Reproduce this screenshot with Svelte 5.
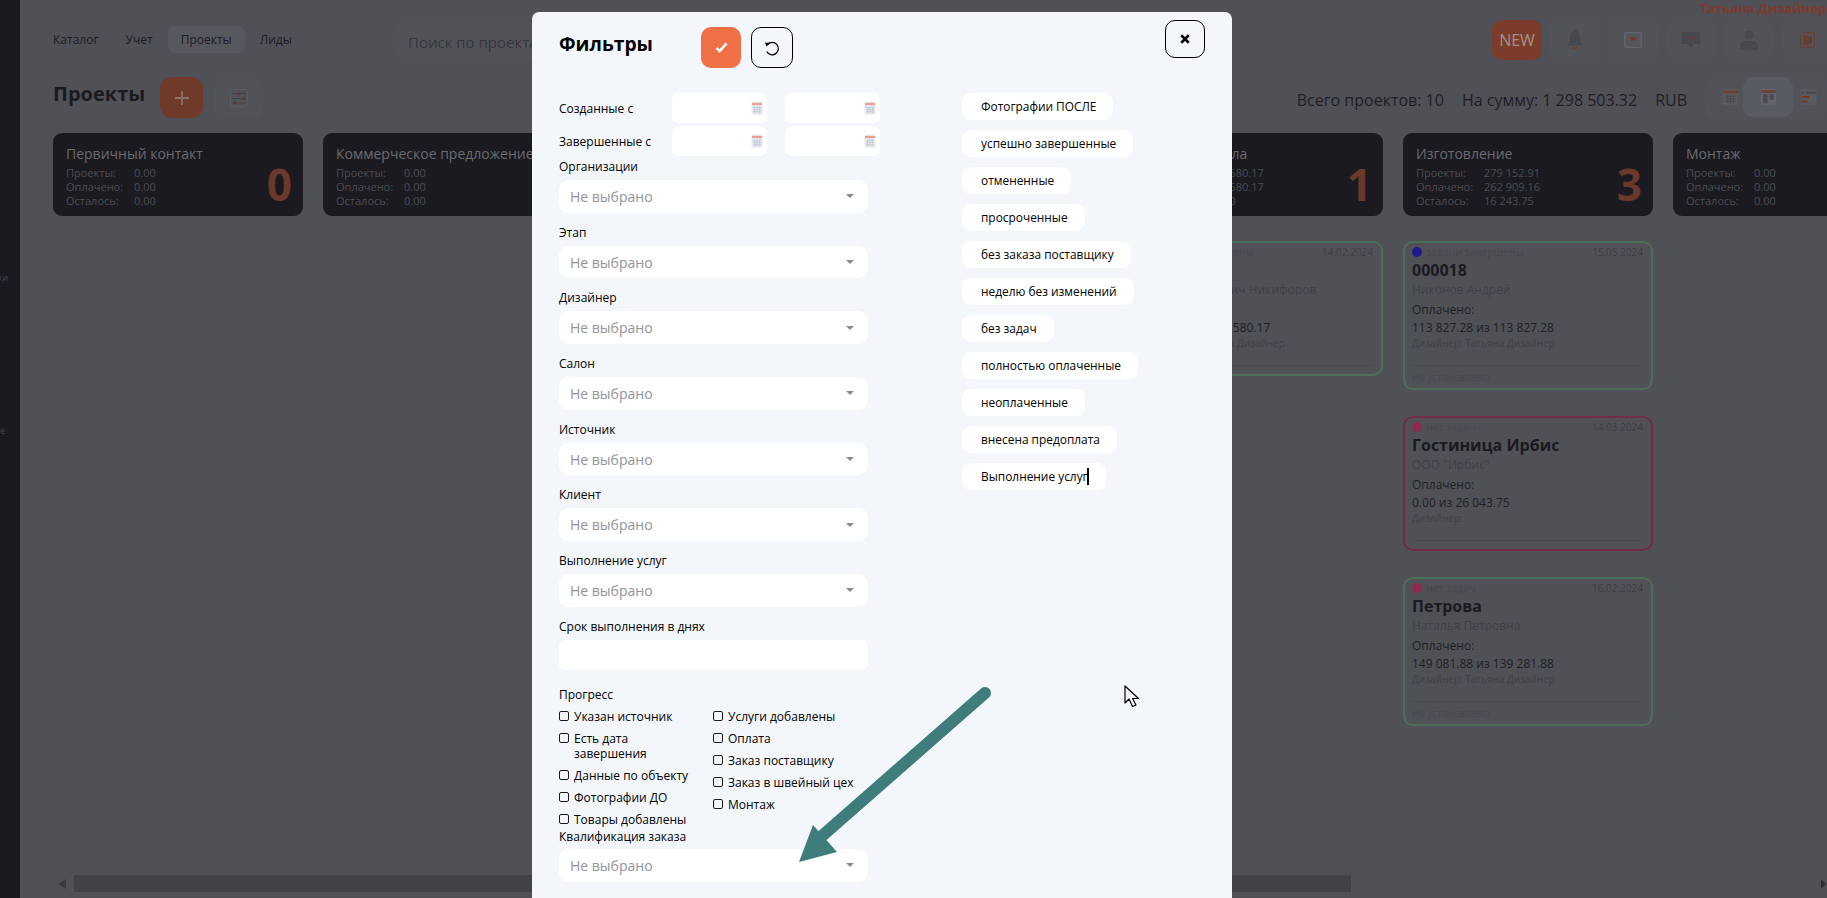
<script>
  const tabs = ['Каталог', 'Учет', 'Проекты', 'Лиды'];
  const stats = [
    { t: 'Первичный контакт', a: '0.00', b: '0.00', c: '0.00', n: 0 },
    { t: 'Коммерческое предложение', a: '0.00', b: '0.00', c: '0.00', n: 0 },
    null,
    null,
    { t: 'Проект начала', a: '43 580.17', b: '43 580.17', c: '0.00', n: 1 },
    { t: 'Изготовление', a: '279 152.91', b: '262 909.16', c: '16 243.75', n: 3 },
    { t: 'Монтаж', a: '0.00', b: '0.00', c: '0.00', n: 0 }
  ];
  const col5 = [
    { tone: 'green', dot: 'blue', st: 'задачи завершены', date: '14.02.2024', title: '', who: 'Сергей Иванович Никифоров', sum: '43 580.17 из 43 580.17', des: 'Дизайнер: Татьяна Дизайнер', foot: '' }
  ];
  const col6 = [
    { tone: 'green', dot: 'blue', st: 'задачи завершены', date: '15.05.2024', title: '000018', who: 'Никонов Андрей', sum: '113 827.28 из 113 827.28', des: 'Дизайнер: Татьяна Дизайнер', foot: 'Не установлено' },
    { tone: 'red', dot: 'red', st: 'нет задач', date: '14.03.2024', title: 'Гостиница Ирбис', who: 'ООО "Ирбис"', sum: '0.00 из 26 043.75', des: 'Дизайнер:', foot: '' },
    { tone: 'green', dot: 'red', st: 'нет задач', date: '16.02.2024', title: 'Петрова', who: 'Наталья Петровна', sum: '149 081.88 из 139 281.88', des: 'Дизайнер: Татьяна Дизайнер', foot: 'Не установлено' }
  ];
  const columns = [[], [], [], [], col5, col6];
  const selects = ['Организации', 'Этап', 'Дизайнер', 'Салон', 'Источник', 'Клиент', 'Выполнение услуг'];
  const checksA = ['Указан источник', 'Есть дата завершения', 'Данные по объекту', 'Фотографии ДО', 'Товары добавлены'];
  const checksB = ['Услуги добавлены', 'Оплата', 'Заказ поставщику', 'Заказ в швейный цех', 'Монтаж'];
  const pills = ['Фотографии ПОСЛЕ', 'успешно завершенные', 'отмененные', 'просроченные', 'без заказа поставщику', 'неделю без изменений', 'без задач', 'полностью оплаченные', 'неоплаченные', 'внесена предоплата'];
  const dates = ['Созданные с', 'Завершенные с'];
</script>

{#snippet calIcon()}
  <svg class="cal" viewBox="0 0 12 14" width="12" height="14">
    <rect x="0.5" y="0.5" width="11" height="13" rx="1.5" fill="#e4e8ee" />
    <rect x="1" y="2" width="10" height="2" fill="#ee9c8c" />
    <path d="M2 6.5h8M2 8.5h8M2 10.5h8M3.5 5.5v6.5M6 5.5v6.5M8.5 5.5v6.5" stroke="#c3c9d3" stroke-width="0.8" />
  </svg>
{/snippet}

{#snippet dimCal()}
  <svg viewBox="0 0 18 20" width="17" height="18">
    <rect x="0.5" y="1" width="17" height="18" rx="2" fill="#5a5b61" />
    <rect x="1" y="3" width="16" height="3" fill="#6b3f31" />
    <path d="M3 9h12M3 12h12M3 15h12M6 8v9M9 8v9M12 8v9" stroke="#47484e" stroke-width="1.1" />
  </svg>
{/snippet}

{#snippet cardView(c)}
  <div class="job {c.tone}">
    <div class="job-top">
      <span class="dot {c.dot}"></span>
      <span class="st">{c.st}</span>
      <span class="date">{c.date}</span>
    </div>
    <div class="job-title">{c.title}</div>
    <div class="job-who">{c.who}</div>
    <div class="job-paid">Оплачено:</div>
    <div class="job-sum">{c.sum}</div>
    <div class="job-des">{c.des}</div>
    <div class="job-foot">{c.foot}</div>
  </div>
{/snippet}

<div class="page">
  <aside class="side">
    <span class="side-a">ки</span>
    <span class="side-b">е</span>
  </aside>

  <main class="main">
    <header class="top">
      <nav class="tabs">
        {#each tabs as t}
          <span class="tab" class:on={t === 'Проекты'}>{t}</span>
        {/each}
      </nav>
      <div class="search">Поиск по проектам</div>
      <div class="top-right">
        <div class="user">Татьяна Дизайнер</div>
        <div class="icons">
          <span class="new">NEW</span>
          <span class="ib">
            <svg viewBox="0 0 20 26" width="18" height="24"><circle cx="10" cy="3" r="2" fill="#47484e" /><path d="M10 3c-4 0-5.500 3-5.500 7 0 5-1.500 7-3.500 9h18c-2-2-3.500-4-3.500-9 0-4-1.500-7-5.500-7z" fill="#47484e" /><path d="M6 21h8l-4 2.500z" fill="#733a2a" /></svg>
          </span>
          <span class="ib">
            <svg viewBox="0 0 18 16" width="18" height="16"><rect x="0.700" y="0.700" width="16.600" height="14.600" rx="1.500" fill="#56575d" stroke="#66676d" stroke-width="1.200" /><path d="M4 5h10l-5 4z" fill="#733a2a" /></svg>
          </span>
          <span class="ib">
            <svg viewBox="0 0 20 18" width="20" height="18"><path d="M2 1h16a1.500 1.500 0 0 1 1.500 1.500v9a1.500 1.500 0 0 1-1.500 1.500h-5l-3 3.500-3-3.500h-5a1.500 1.500 0 0 1-1.500-1.500v-9a1.500 1.500 0 0 1 1.500-1.500z" fill="#47484e" /><circle cx="6" cy="7" r="1" fill="#733a2a" /><circle cx="10" cy="7" r="1" fill="#733a2a" /><circle cx="14" cy="7" r="1" fill="#733a2a" /></svg>
          </span>
          <span class="ib">
            <svg viewBox="0 0 18 20" width="18" height="20"><circle cx="9" cy="5" r="4.500" fill="#48494f" /><path d="M0 20v-4c0-3 3-5 5-5h8c2 0 5 2 5 5v4z" fill="#48494f" /></svg>
          </span>
          <span class="ib">
            <svg viewBox="0 0 15 16" width="15" height="16"><rect x="0.700" y="0.700" width="13.600" height="14.600" rx="1.500" fill="none" stroke="#6b3e30" stroke-width="1.200" /><path d="M3 2.500l6 1.500v10l-6-1.500z" fill="#6b3e30" /><path d="M9 4h3v8h-3" fill="#46474c" /></svg>
          </span>
        </div>
      </div>
    </header>

    <section class="head">
      <h1>Проекты</h1>
      <span class="add">
        <svg viewBox="0 0 16 16" width="16" height="16"><path d="M8 1v14M1 8h14" stroke="#8d7068" stroke-width="1.800" /></svg>
      </span>
      <span class="fil">
        <svg viewBox="0 0 18 18" width="18" height="18"><rect x="0.500" y="0.500" width="17" height="17" rx="2" fill="none" stroke="#606167" stroke-width="0.800" /><path d="M2 4.500h14M2 9.500h14M2 14h14" stroke="#414248" stroke-width="1" /><circle cx="9" cy="4.500" r="1.500" fill="#6b3428" /><circle cx="14" cy="9.500" r="1.500" fill="#6b3428" /><circle cx="5" cy="14" r="1.500" fill="#6b3428" /></svg>
      </span>
      <div class="totals">
        <span>Всего проектов: 10</span>
        <span>На сумму: 1 298 503.32</span>
        <span>RUB</span>
      </div>
      <div class="views">
        <span class="vb">{@render dimCal()}</span>
        <span class="vb act">
          <svg viewBox="0 0 18 20" width="17" height="18"><rect x="0.500" y="1" width="17" height="18" rx="2" fill="#62636c" /><rect x="1" y="2.500" width="16" height="3" fill="#6b3f31" /><rect x="3" y="7" width="5" height="10" fill="#4a4b52" /><rect x="10" y="7" width="5" height="6" fill="#4a4b52" /></svg>
        </span>
        <span class="vb last">
          <svg viewBox="0 0 18 20" width="17" height="18"><rect x="0" y="1" width="18" height="18" rx="2" fill="#5a5b61" /><path d="M1 5h3M6 5h11" stroke="#47484e" stroke-width="2.500" /><path d="M1 10h9M1 15h7" stroke="#6f3b2d" stroke-width="2.500" /></svg>
        </span>
      </div>
    </section>

    <section class="stats">
      {#each stats as s}
        <div class="stat">
          {#if s}
            <div>
              <div class="stat-t">{s.t}</div>
              <div class="stat-r"><span>Проекты:</span><span>{s.a}</span></div>
              <div class="stat-r"><span>Оплачено:</span><span>{s.b}</span></div>
              <div class="stat-r"><span>Осталось:</span><span>{s.c}</span></div>
            </div>
            <div class="stat-n">{s.n}</div>
          {/if}
        </div>
      {/each}
    </section>

    <section class="board">
      {#each columns as col}
        <div class="col">
          {#each col as c}
            {@render cardView(c)}
          {/each}
        </div>
      {/each}
    </section>

    <div class="scroll">
      <span class="arr l"></span>
      <span class="thumb"></span>
      <span class="arr r"></span>
    </div>
  </main>

  <div class="modal">
    <button class="close" aria-label="Закрыть">
      <svg viewBox="0 0 12 12" width="10" height="10"><path d="M1.500 1.500l9 9M10.500 1.500l-9 9" stroke="#000" stroke-width="3" /></svg>
    </button>
    <div class="m-head">
      <h2>Фильтры</h2>
      <button class="ok" aria-label="Применить">
        <svg viewBox="0 0 14 12" width="13" height="11"><path d="M1.500 6.500l3.500 3.500 7.500-8.500" fill="none" stroke="#fff" stroke-width="2.800" /></svg>
      </button>
      <button class="undo" aria-label="Сбросить">
        <svg viewBox="0 0 16 16" width="16" height="16"><path d="M3.500 4.500a6.200 6.200 0 1 1-0.800 7" fill="none" stroke="#000" stroke-width="1.300" /><path d="M1 2.500l5 .5-3.500 3.500z" fill="#000" /></svg>
      </button>
    </div>

    <div class="m-body">
      <div class="left">
        {#each dates as d}
          <div class="drow">
            <span class="dl">{d}</span>
            <span class="dinp">{@render calIcon()}</span>
            <span class="dinp">{@render calIcon()}</span>
          </div>
        {/each}
        <div class="groups">
          {#each selects as s}
            <div class="lab">{s}</div>
            <div class="sel"><span>Не выбрано</span><i></i></div>
          {/each}
          <div class="lab">Срок выполнения в днях</div>
          <div class="inp"></div>
        </div>
        <div class="lab prog">Прогресс</div>
        <div class="checks">
          <div class="cc">
            {#each checksA as c}
              <div class="chk"><b></b><span>{c}</span></div>
            {/each}
          </div>
          <div class="cc">
            {#each checksB as c}
              <div class="chk"><b></b><span>{c}</span></div>
            {/each}
          </div>
        </div>
        <div class="lab qual">Квалификация заказа</div>
        <div class="sel"><span>Не выбрано</span><i></i></div>
      </div>

      <div class="right">
        {#each pills as p}
          <span class="pill">{p}</span>
        {/each}
        <span class="pill">Выполнение услуг<em></em></span>
      </div>
    </div>
  </div>

  <svg class="arrow" viewBox="0 0 1827 898" width="1827" height="898">
    <path d="M985 693L822 836" stroke="#3f7d7d" stroke-width="12" stroke-linecap="round" fill="none" />
    <path d="M799 862L813 825L837 852z" fill="#3f7d7d" />
  </svg>
  <svg class="mouse" viewBox="0 0 16 25" width="16" height="25">
    <path d="M1 1v17l4-4 3.500 7.500 3.500-1.500-3.500-6.500h6z" fill="#f3f7fc" stroke="#000" stroke-width="1.200" stroke-linejoin="round" />
  </svg>
</div>

<style>
  :global(body) { margin: 0; }
  * { box-sizing: border-box; }
  .page {
    width: 1827px; height: 898px; display: flex; overflow: hidden; position: relative;
    background: #505157; font-family: "Open Sans", "Noto Sans", sans-serif; color: #1c1c22;
  }
  .side { width: 20px; flex: none; background: #1a1a20; position: relative; color: #45464b; font-size: 9px; }
  .side-a { position: absolute; right: 12px; top: 271px; }
  .side-b { position: absolute; right: 15px; top: 424px; }
  .main { flex: 1; min-width: 0; display: flex; flex-direction: column; padding-left: 33px; }

  .top { display: flex; align-items: flex-start; height: 60px; }
  .tabs { display: flex; align-items: center; width: 339px; margin-top: 26px; height: 27px; font-size: 12px; }
  .tab { padding: 0 13px; line-height: 27px; border-radius: 7px; }
  .tab:first-child { padding-left: 0; padding-right: 27px; }
  .tab:nth-child(2) { padding: 0 15px 0 0; }
  .tab:last-child { padding: 0 0 0 15px; }
  .tab.on { background: #56585f; }
  .search { width: 620px; height: 38px; margin-top: 22px; padding-left: 16px; line-height: 40px; font-size: 15px; background: #525359; border-radius: 12px; color: #35363c; }
  .top-right { margin-left: auto; margin-right: -5px; width: 340px; }
  .user { height: 20px; margin-left: 208px; line-height: 17px; font-size: 13px; font-weight: 700; color: #7d3a2c; white-space: nowrap; }
  .icons { display: flex; gap: 8px; }
  .new { width: 50px; height: 40px; border-radius: 10px; background: #7b3c2b; color: #a68f88; font-size: 16px; display: flex; align-items: center; justify-content: center; }
  .ib { width: 50px; height: 40px; border-radius: 10px; background: #525359; display: flex; align-items: center; justify-content: center; }

  .head { display: flex; align-items: flex-start; height: 41px; margin-top: 17px; }
  h1 { margin: 0; width: 107px; font-size: 20px; font-weight: 700; line-height: 34px; color: #1a1a20; }
  .add { width: 43px; height: 41px; border-radius: 12px; background: #6f3a2a; display: flex; align-items: center; justify-content: center; }
  .fil { width: 49px; height: 41px; margin-left: 11px; border-radius: 10px; background: #525359; display: flex; align-items: center; justify-content: center; }
  .totals { margin-left: auto; display: flex; gap: 18px; font-size: 16px; line-height: 46px; color: #1e1e24; white-space: nowrap; }
  .views { display: flex; margin-left: 18px; width: 122px; height: 40px; background: #525359; border-radius: 10px; flex: none; }
  .vb { width: 38px; height: 40px; display: flex; align-items: center; justify-content: center; flex: none; }
  .vb:first-child { padding-left: 12px; }
  .vb.act { width: 50px; background: #585a64; border-radius: 10px; }
  .vb.last { width: 30px; }

  .stats { display: flex; gap: 20px; margin-top: 15px; flex: none; }
  .stat { width: 250px; height: 83px; flex: none; border-radius: 9px; background: #1a1a20; padding: 11px 11px 0 13px; display: flex; justify-content: space-between; }
  .stat-t { font-size: 14px; line-height: 20px; color: #6a6b70; white-space: nowrap; margin-bottom: 2px; }
  .stat-r { display: flex; font-size: 11px; line-height: 14px; color: #4c4d52; white-space: nowrap; }
  .stat-r span:first-child { width: 68px; }
  .stat-n { font-size: 44px; font-weight: 700; line-height: 60px; margin-top: 10px; color: #6a392b; }

  .board { display: flex; gap: 20px; margin-top: 25px; flex: 1; min-height: 0; overflow: hidden; }
  .col { width: 250px; flex: none; display: flex; flex-direction: column; gap: 26px; }
  .job { border: 2px solid; border-radius: 10px; padding: 2px 8px 4px 7px; }
  .job.green { border-color: #496f58; }
  .job.red { border-color: #722c46; }
  .job-top { display: flex; align-items: center; height: 14px; }
  .dot { width: 10px; height: 10px; border-radius: 50%; margin-right: 4px; }
  .dot.blue { background: #1c1c8a; }
  .dot.red { background: #8c2a50; }
  .st { font-size: 10.500px; color: #46474d; }
  .date { margin-left: auto; font-size: 10px; color: #3d3e44; }
  .job-title { font-size: 16px; font-weight: 700; line-height: 22px; min-height: 22px; color: #1a1a20; }
  .job-who { font-size: 12px; line-height: 18px; color: #3f4046; white-space: nowrap; }
  .job-paid { font-size: 12px; line-height: 18px; margin-top: 2px; color: #1e1e24; }
  .job-sum { font-size: 12px; line-height: 17px; color: #1e1e24; }
  .job-des { font-size: 10px; line-height: 14px; color: #3f4046; padding-bottom: 15px; border-bottom: 1px solid #4a4b51; }
  .job-foot { font-size: 10px; line-height: 14px; margin-top: 4px; color: #47484e; }

  .scroll { height: 23px; padding-bottom: 6px; margin-left: -33px; flex: none; display: flex; align-items: stretch; padding-left: 35px; position: relative; }
  .thumb { width: 1277px; margin-left: 19px; background: #414146; }
  .arr { width: 0; height: 0; align-self: center; border-top: 5px solid transparent; border-bottom: 5px solid transparent; }
  .arr.l { border-right: 8px solid #3a3b40; margin-left: 3px; margin-right: -11px; }
  .arr.r { border-left: 5px solid #2c2d32; margin-left: auto; margin-right: 1px; }

  .modal { position: absolute; left: 532px; top: 12px; bottom: 0; width: 700px; background: #f3f7fc; border-radius: 7px 7px 0 0; padding: 15px 0 0 27px; color: #000; overflow: hidden; }
  .close { position: absolute; top: 8px; right: 27px; width: 40px; height: 38px; border: 1.500px solid #000; border-radius: 10px; background: none; padding: 0; display: flex; align-items: center; justify-content: center; }
  .m-head { display: flex; align-items: flex-start; height: 41px; }
  h2 { margin: 0; width: 142px; font-size: 19.300px; font-weight: 700; line-height: 34px; }
  .ok { width: 40px; height: 41px; border: 0; padding: 0; border-radius: 10px; background: #f07045; display: flex; align-items: center; justify-content: center; }
  .undo { width: 42px; height: 41px; margin-left: 10px; border: 1.500px solid #000; padding: 0; border-radius: 10px; background: none; display: flex; align-items: center; justify-content: center; }

  .m-body { display: flex; margin-top: 25px; }
  .left { width: 309px; flex: none; }
  .drow { display: flex; align-items: center; height: 30px; margin-bottom: 3px; }
  .dl { width: 113px; flex: none; font-size: 12px; }
  .dinp { width: 95px; flex: none; height: 30px; background: #fff; border-radius: 7px; display: flex; align-items: center; justify-content: flex-end; padding-right: 4px; }
  .dinp + .dinp { margin-left: 18px; }
  .groups { margin-top: 3px; }
  .lab { font-size: 12px; line-height: 16px; margin-bottom: 5px; }
  .sel { height: 32.700px; background: #fff; border-radius: 10px; display: flex; align-items: center; justify-content: space-between; padding: 0 14px 0 11px; font-size: 14px; color: #929497; margin-bottom: 12px; }
  .sel i { width: 0; height: 0; border-left: 4px solid transparent; border-right: 4px solid transparent; border-top: 4px solid #8a8c90; }
  .inp { height: 30px; background: #fff; border-radius: 6px; }
  .lab.prog { margin-top: 17px; margin-bottom: 6px; }
  .checks { display: flex; }
  .cc { width: 154px; flex: none; }
  .cc:first-child { padding-right: 24px; }
  .chk { display: flex; font-size: 12px; line-height: 15px; margin-bottom: 7px; }
  .chk b { width: 10px; height: 10px; border: 1.400px solid #1a1a1a; border-radius: 2px; margin: 2px 5px 0 0; flex: none; }
  .lab.qual { margin-top: -5px; margin-bottom: 4px; }
  .right { margin-left: 94px; display: flex; flex-direction: column; align-items: flex-start; gap: 10px; }
  .pill { height: 27px; background: #fff; border-radius: 9px; padding: 0 17px 0 19px; font-size: 11.900px; line-height: 27px; white-space: nowrap; display: flex; align-items: center; }
  .pill em { display: block; width: 2px; height: 17px; background: #000; margin-left: -1px; }

  .arrow { position: absolute; left: 0; top: 0; pointer-events: none; }
  .mouse { position: absolute; left: 1124px; top: 685px; }
  .cal { display: block; }
</style>
